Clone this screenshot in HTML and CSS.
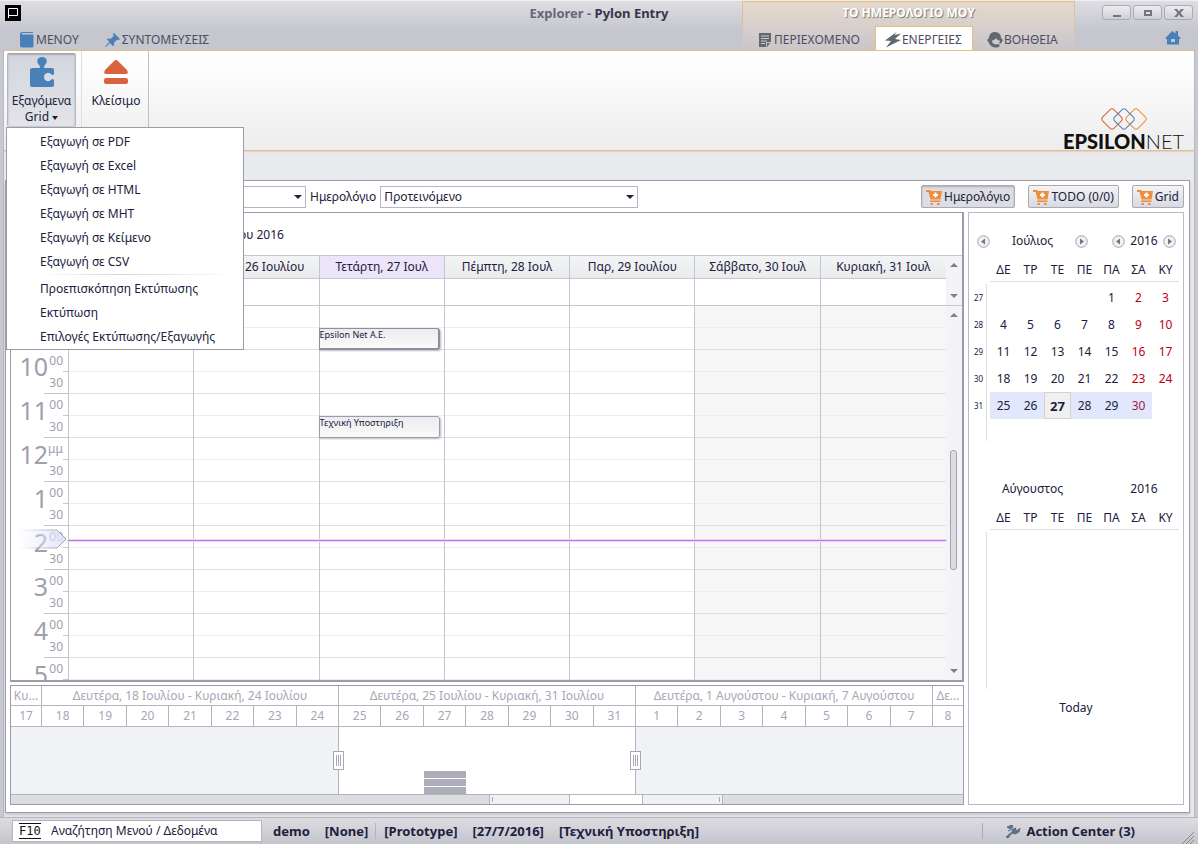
FILE: index.html
```html
<!DOCTYPE html>
<html lang="el">
<head>
  <meta charset="UTF-8" />
  <title>Explorer - Pylon Entry</title>
  <link rel="stylesheet" href="styles.css">
</head>
<body>
  <!-- shared icons -->
  <svg class="defs" aria-hidden="true">
    <symbol id="cart" viewBox="0 0 16 16">
      <path fill="#ef8d3c" d="M0 1h4l1 1h11l-1.500 8.500H4.500L2.500 3H0zM4 11.500h10.500V13H4zM4.500 14H7v2H4.500zM11 14h2.500v2H11z"/>
      <path fill="#fff" d="M8.500 3.500h2V5H12v2h-1.500v1.500h-2V7H7V5h1.500z"/>
    </symbol>
    <symbol id="prev" viewBox="0 0 13 13">
      <circle cx="6.500" cy="6.500" r="5.800" fill="#f0f0f4" stroke="#a3a4ae"/>
      <path fill="#74757f" d="M8 3.500v6l-4-3z"/>
    </symbol>
    <symbol id="next" viewBox="0 0 13 13">
      <circle cx="6.500" cy="6.500" r="5.800" fill="#f0f0f4" stroke="#a3a4ae"/>
      <path fill="#74757f" d="M5 3.500v6l4-3z"/>
    </symbol>
  </svg>

  <header class="header">
    <div class="header-main">
      <svg class="app-icon" viewBox="0 0 16 16" aria-hidden="true">
        <path d="M0 0h16v16H0z"/>
        <path d="M3.500 13V3.500h9v7h-9" fill="none" stroke="#fff"/>
      </svg>
      <nav class="tabs" aria-label="Κύριες καρτέλες">
        <button class="tab">
          <svg viewBox="0 0 16 16" aria-hidden="true"><path fill="#4a80b8" d="M3 0h11v1H3v1.500h11.500V14q0 1.500-1.500 1.500H3Q1 15.500 1 13V2.500Q1 0 3 0z"/></svg>ΜΕΝΟΥ
        </button>
        <button class="tab">
          <svg viewBox="0 0 16 16" aria-hidden="true"><path fill="#4a80b8" d="M9 1l6 6-1.500 1-1.500-.3-3 3 .2 2.300L8 14.200 5 11l-4 4-.7-.7L4.300 10 2 7.500 3.200 6.500l2.500.3 3-2.800L8 2z"/></svg>ΣΥΝΤΟΜΕΥΣΕΙΣ
        </button>
      </nav>
    </div>
    <div class="context">
      <div class="context-title">ΤΟ ΗΜΕΡΟΛΟΓΙΟ ΜΟΥ</div>
      <nav class="tabs" aria-label="Το ημερολόγιο μου">
        <button class="tab">
          <svg viewBox="0 0 16 16" aria-hidden="true"><path fill="#616870" d="M2 1h12v9l-4 5H2z"/><path d="M4 4h8M4 6.500h8M4 9h6M4 11.500h4M9.500 14.500v-4H14" fill="none" stroke="#c9c7ca"/></svg>ΠΕΡΙΕΧΟΜΕΝΟ
        </button>
        <button class="tab active">
          <svg viewBox="0 0 16 16" aria-hidden="true"><path fill="#616870" d="M11.500 0L0 8.500l6 .5-5 6.500L16 8l-6-1 6-5.500-6.500 1.500z"/></svg>ΕΝΕΡΓΕΙΕΣ
        </button>
        <button class="tab">
          <svg viewBox="0 0 16 16" aria-hidden="true"><path fill="#616870" d="M8 0C3.500 0 2 3.500 2 6L0 8l2 3c1 3 4 4.500 7 4.500 2 0 3-.5 4-2L11 12c-4 1.500-6-1-6-3.500C7 8.500 8 7.500 9 6c1 2 2.500 2.500 4 2.500 0 1-.5 2-1 3h2l2-3.500-2-2C14 3 12 0 8 0z"/></svg>ΒΟΗΘΕΙΑ
        </button>
      </nav>
    </div>
    <div class="header-end">
      <div class="window-buttons">
        <button aria-label="Ελαχιστοποίηση"><svg viewBox="0 0 10 10"><path d="M1 7h8v2H1z"/></svg></button>
        <button aria-label="Μεγιστοποίηση"><svg viewBox="0 0 10 10"><path fill-rule="evenodd" d="M1 2h8v6H1zM3 4v2h4V4z"/></svg></button>
        <button aria-label="Κλείσιμο παραθύρου"><svg viewBox="0 0 10 10"><path d="M0 1h3l2 2.500L7 1h3L6.500 5 10 9H7L5 6.500 3 9H0l3.500-4z"/></svg></button>
      </div>
      <a class="home" href="#" aria-label="Αρχική"><svg viewBox="0 0 16 16"><path fill="#4a80b8" fill-rule="evenodd" d="M7 1l3.500 2.500V1H13v4.500L15.500 8v1H14v5.500H2V9H.5V8zM6 9v3h4V9z"/></svg></a>
    </div>
    <h1 class="title"><span>Explorer - </span>Pylon Entry</h1>
  </header>

  <main class="frame">
    <section class="ribbon" aria-label="Ενέργειες">
      <div class="ribbon-group">
        <button class="ribbon-button pressed" aria-haspopup="true" aria-expanded="true">
          <svg viewBox="0 0 32 32" aria-hidden="true"><path fill="#4a80b8" d="M4 13q0-2 2-2h7.500q1-1 0-2.500-3-3-2-6Q12.500 0 16 0t4.500 2.500q1 3-2 6-1 1.500 0 2.500H26q2 0 2 2v4q-1.200 1.500-2.500.5-2-2.200-4.500-1.500-3 1-3 4t3 4q2.500.700 4.500-1.500 1.300-1 2.500.5v5q0 2-2 2H6q-2 0-2-2z"/></svg>
          <span>Εξαγόμενα<br>Grid <i class="caret"></i></span>
        </button>
        <ul class="menu" role="menu">
          <li role="menuitem">Εξαγωγή σε PDF</li>
          <li role="menuitem">Εξαγωγή σε Excel</li>
          <li role="menuitem">Εξαγωγή σε HTML</li>
          <li role="menuitem">Εξαγωγή σε MHT</li>
          <li role="menuitem">Εξαγωγή σε Κείμενο</li>
          <li role="menuitem">Εξαγωγή σε CSV</li>
          <li class="separator" role="separator"></li>
          <li role="menuitem">Προεπισκόπηση Εκτύπωσης</li>
          <li role="menuitem">Εκτύπωση</li>
          <li role="menuitem">Επιλογές Εκτύπωσης/Εξαγωγής</li>
        </ul>
      </div>
      <div class="ribbon-group">
        <button class="ribbon-button">
          <svg viewBox="0 0 32 32" aria-hidden="true"><path fill="#d9623f" d="M14 4q2-2 4 0l9 9q2 4-1 4H6q-3 0-1-4zM6 21h20q2 0 2 2v2q0 2-2 2H6q-2 0-2-2v-2q0-2 2-2z"/></svg>
          <span>Κλείσιμο</span>
        </button>
      </div>
      <div class="logo">
        <svg viewBox="0 0 48 24" aria-hidden="true" fill="none">
          <rect x="4" y="4" width="16" height="16" rx="3" transform="rotate(45 12 12)" stroke="#d9623f"/>
          <rect x="28" y="4" width="16" height="16" rx="3" transform="rotate(45 36 12)" stroke="#ef8d3c"/>
          <rect x="16" y="4" width="16" height="16" rx="3" transform="rotate(45 24 12)" stroke="#4a80b8"/>
        </svg>
        <div class="logo-text"><b>EPSILON</b>NET</div>
      </div>
    </section>

    <section class="panel">
      <div class="toolbar">
        <span class="select view-select"><select aria-label="Προβολή"><option></option></select></span>
        <label for="calendar">Ημερολόγιο</label>
        <span class="select calendar-select"><select id="calendar"><option>Προτεινόμενο</option></select></span>
        <div class="toggles">
          <button class="pressed"><svg><use href="#cart"/></svg>Ημερολόγιο</button>
          <button><svg><use href="#cart"/></svg>TODO (0/0)</button>
          <button><svg><use href="#cart"/></svg>Grid</button>
        </div>
      </div>

      <div class="workspace">
        <div class="left">
          <div class="scheduler">
            <div class="caption">Δευτέρα, 25 Ιουλίου - Κυριακή, 31 Ιουλίου 2016</div>
            <div class="row day-heads">
              <div></div>
              <div>Δευτέρα, 25 Ιουλ</div>
              <div>Τρίτη, 26 Ιουλίου</div>
              <div class="today">Τετάρτη, 27 Ιουλ</div>
              <div>Πέμπτη, 28 Ιουλ</div>
              <div>Παρ, 29 Ιουλίου</div>
              <div>Σάββατο, 30 Ιουλ</div>
              <div>Κυριακή, 31 Ιουλ</div>
              <div class="scroll"><i class="up"></i></div>
            </div>
            <div class="row all-day">
              <div></div><div></div><div></div><div></div><div></div><div></div><div></div><div></div>
              <div class="scroll bottom"><i class="down"></i></div>
            </div>
            <div class="row hours">
              <div class="ruler">
                <div class="hour"><b>9</b><span>00</span><span>30</span></div>
                <div class="hour"><b>10</b><span>00</span><span>30</span></div>
                <div class="hour"><b>11</b><span>00</span><span>30</span></div>
                <div class="hour"><b>12</b><span>μμ</span><span>30</span></div>
                <div class="hour"><b>1</b><span>00</span><span>30</span></div>
                <div class="hour"><b>2</b><span>00</span><span>30</span></div>
                <div class="hour"><b>3</b><span>00</span><span>30</span></div>
                <div class="hour"><b>4</b><span>00</span><span>30</span></div>
                <div class="hour"><b>5</b><span>00</span></div>
              </div>
              <div class="day"></div>
              <div class="day"></div>
              <div class="day">
                <div class="event selected">Epsilon Net A.E.</div>
                <div class="event second">Τεχνική Υποστηριξη</div>
              </div>
              <div class="day"></div>
              <div class="day"></div>
              <div class="day weekend"></div>
              <div class="day weekend"></div>
              <div class="scroll"><i class="up"></i><span class="thumb"></span><i class="down"></i></div>
              <svg class="now-marker" viewBox="0 0 50 20" aria-hidden="true">
                <defs>
                  <linearGradient id="fade"><stop offset="0" stop-color="#e4e8fa" stop-opacity="0"/><stop offset="1" stop-color="#dde3f8" stop-opacity=".9"/></linearGradient>
                  <linearGradient id="edge"><stop offset="0" stop-color="#9a9cab" stop-opacity="0"/><stop offset="1" stop-color="#9a9cab"/></linearGradient>
                </defs>
                <path d="M0 1h39l9 9-9 9H0" fill="url(#fade)" stroke="url(#edge)"/>
              </svg>
              <div class="now-line"></div>
            </div>
          </div>

          <div class="navigator">
            <div class="weeks">
              <div>Κυ...</div>
              <div>Δευτέρα, 18 Ιουλίου - Κυριακή, 24 Ιουλίου</div>
              <div>Δευτέρα, 25 Ιουλίου - Κυριακή, 31 Ιουλίου</div>
              <div>Δευτέρα, 1 Αυγούστου - Κυριακή, 7 Αυγούστου</div>
              <div>Δε...</div>
            </div>
            <div class="dates">
              <div>17</div>
              <div>18</div><div>19</div><div>20</div><div>21</div><div>22</div><div>23</div><div>24</div>
              <div>25</div><div>26</div><div>27</div><div>28</div><div>29</div><div>30</div><div>31</div>
              <div>1</div><div>2</div><div>3</div><div>4</div><div>5</div><div>6</div><div>7</div>
              <div>8</div>
            </div>
            <div class="range">
              <div class="visible">
                <i class="handle start"></i>
                <div class="load"><i></i><i></i><i></i></div>
                <i class="handle end"></i>
              </div>
            </div>
            <div class="range-bar"><span></span><span class="from"></span><span class="white"></span><span class="to"></span><span></span></div>
          </div>
        </div>

        <aside class="months">
          <div class="month-head">
            <button aria-label="Προηγούμενος μήνας"><svg><use href="#prev"/></svg></button>
            <span class="month-name">Ιούλιος</span>
            <button aria-label="Επόμενος μήνας"><svg><use href="#next"/></svg></button>
            <button class="year-prev" aria-label="Προηγούμενο έτος"><svg><use href="#prev"/></svg></button>
            <span class="year">2016</span>
            <button aria-label="Επόμενο έτος"><svg><use href="#next"/></svg></button>
          </div>
          <table class="month">
            <thead>
              <tr><td class="wk"></td><th>ΔΕ</th><th>ΤΡ</th><th>ΤΕ</th><th>ΠΕ</th><th>ΠΑ</th><th>ΣΑ</th><th>ΚΥ</th></tr>
            </thead>
            <tbody>
              <tr><td class="wk">27</td><td></td><td></td><td></td><td></td><td>1</td><td class="red">2</td><td class="red">3</td></tr>
              <tr><td class="wk">28</td><td>4</td><td>5</td><td>6</td><td>7</td><td>8</td><td class="red">9</td><td class="red">10</td></tr>
              <tr><td class="wk">29</td><td>11</td><td>12</td><td>13</td><td>14</td><td>15</td><td class="red">16</td><td class="red">17</td></tr>
              <tr><td class="wk">30</td><td>18</td><td>19</td><td>20</td><td>21</td><td>22</td><td class="red">23</td><td class="red">24</td></tr>
              <tr class="current"><td class="wk">31</td><td>25</td><td>26</td><td class="selected">27</td><td>28</td><td>29</td><td class="red">30</td><td class="none"></td></tr>
              <tr class="last"><td class="wk"></td><td colspan="7"></td></tr>
            </tbody>
          </table>
          <div class="month-head next-month">
            <span class="month-name">Αύγουστος</span>
            <span class="year">2016</span>
          </div>
          <table class="month">
            <thead>
              <tr><td class="wk"></td><th>ΔΕ</th><th>ΤΡ</th><th>ΤΕ</th><th>ΠΕ</th><th>ΠΑ</th><th>ΣΑ</th><th>ΚΥ</th></tr>
            </thead>
            <tbody>
              <tr class="empty"><td class="wk"></td><td colspan="7"></td></tr>
            </tbody>
          </table>
          <button class="today-button">Today</button>
        </aside>
      </div>
    </section>
  </main>

  <footer class="status">
    <label class="search"><kbd>F10</kbd><input type="text" value="Αναζήτηση Μενού / Δεδομένα"></label>
    <span>demo</span>
    <span>[None]</span>
    <span class="divided">[Prototype]</span>
    <span>[27/7/2016]</span>
    <span>[Τεχνική Υποστηριξη]</span>
    <button class="action-center">
      <svg viewBox="0 0 16 16" aria-hidden="true"><path d="M2 4l5-2 1 2-3 2zM1 14l6-5 1-3 3-1-1 3 3-1 2-2-1 4-4 2-3-1-4 5zM8 6l-5 2" fill="#5c7189" stroke="#5c7189"/></svg>Action Center (3)
    </button>
    <svg class="grip" viewBox="0 0 12 12" aria-hidden="true"><path d="M0 12L12 0M4 12l8-8M8 12l4-4" stroke="#85868f" fill="none"/></svg>
  </footer>
</body>
</html>
```

FILE: styles.css
```css
*, *::before, *::after {
  box-sizing: border-box;
}
body {
  margin: 0;
  min-height: 100vh;
  display: flex;
  flex-direction: column;
  font-family: "Noto Sans", "Open Sans", sans-serif;
  font-size: 12px;
  line-height: 16px;
  color: #20203c;
  background: #c8c8d0;
}
button, select, input {
  font: inherit;
  color: inherit;
  padding: 0;
  border: none;
  background: none;
}
svg {
  display: block;
  flex: none;
}
.defs {
  position: absolute;
  width: 0;
  height: 0;
}

/* header */
.header {
  display: grid;
  grid-template-columns: 1fr 333px 123px;
  grid-template-rows: 49px;
  height: 50px;
  background: linear-gradient(#dddde2, #c6c6ce 60%);
  border-top: 1px solid #eeeef1;
}
.header > * {
  grid-row: 1;
}
.title {
  grid-column: 1 / -1;
  justify-self: center;
  align-self: start;
  margin: 4px 0 0;
  font-size: 13px;
  color: #35354c;
  pointer-events: none;
}
.title span {
  color: #66667c;
}
.header-main,
.context,
.header-end {
  display: flex;
  flex-direction: column;
  justify-content: space-between;
}
.header-main {
  grid-column: 1;
}
.context {
  grid-column: 2;
}
.header-end {
  grid-column: 3;
}
.app-icon {
  width: 16px;
  height: 16px;
  margin: 4px 5px;
}
.tabs {
  display: flex;
  height: 24px;
}
.header-main .tabs {
  padding-left: 19px;
  gap: 26px;
}
.tab {
  display: flex;
  align-items: center;
  gap: 1px;
  padding-top: 3px;
  color: #4d4d62;
}
.tab svg {
  width: 16px;
  height: 16px;
}
.context {
  border: solid #e8bf80;
  border-width: 1px 1px 0;
  border-image: linear-gradient(#e8bf80, #c8c8d0) 1;
  background: linear-gradient(#e5d9cd, #c9c6ca);
}
.context-title {
  margin-top: 3px;
  text-align: center;
  font-weight: 700;
  color: #fff;
  text-shadow: 1px 1px 1px #77777f;
}
.context .tab {
  padding: 3px 15px 0 14px;
}
.context .tab.active {
  padding: 2px 10px 0 9px;
  border: 1px solid #e8bf80;
  border-bottom: none;
  background: #fff;
}
.window-buttons {
  display: flex;
  gap: 2px;
  margin: 4px 5px 0;
  justify-content: flex-end;
}
.window-buttons button {
  width: 29px;
  height: 15px;
  display: grid;
  place-items: center;
  border: 1px solid #a9aab4;
  border-radius: 3px;
  background: linear-gradient(#ececf0, #cfcfd7);
}
.window-buttons svg {
  width: 10px;
  height: 10px;
  fill: #73747f;
}
.home {
  align-self: flex-end;
  margin: 0 17px 4px;
}
.home svg {
  width: 16px;
  height: 16px;
}

/* ribbon */
.frame {
  flex: 1;
  margin: 0 3px;
  padding: 0 2px;
  border: 1px solid #b4b5bf;
  border-width: 0 1px;
  background: #e9eaee;
}
.ribbon {
  display: flex;
  height: 101px;
  margin: 0 -2px 29px;
  padding-left: 3px;
  border: 1px solid #e8bf80;
  border-width: 1px 0;
  background: linear-gradient(#fff, #fbfbfb 30%, #ededee);
  box-shadow: 0 1px 1px #dcd6d0;
}
.ribbon-group {
  position: relative;
  height: 76px;
  padding: 2px 5px 0 0;
  border-right: 1px solid #dedee3;
}
.ribbon-group + .ribbon-group {
  padding: 2px 0 0 2px;
  border-color: #bfc0ca;
}
.ribbon-button {
  display: flex;
  flex-direction: column;
  align-items: center;
  width: 69px;
  height: 74px;
  padding-top: 3px;
  border: 1px solid transparent;
}
.ribbon-group + .ribbon-group .ribbon-button {
  width: 64px;
}
.ribbon-button.pressed {
  border-color: #9fa0ad #b4b5c0 #c9cad2;
  border-radius: 2px;
  background: linear-gradient(#d3d6de, #e3e4e8);
  box-shadow: inset 0 1px 2px #a9aab4;
}
.ribbon-button svg {
  width: 32px;
  height: 32px;
  margin-bottom: 4px;
}
.caret {
  display: inline-block;
  vertical-align: middle;
  border: 3px solid transparent;
  border-top: 4px solid #20203c;
  border-bottom: none;
}
.menu {
  position: absolute;
  z-index: 2;
  top: 76px;
  left: -1px;
  width: 238px;
  margin: 0;
  padding: 2px 0 0;
  list-style: none;
  border: 1px solid #9a9bab;
  background: #fff;
}
.menu li {
  padding: 4px 0 4px 33px;
  white-space: nowrap;
}
.menu .separator {
  height: 3px;
  margin: 0 4px 0 33px;
  padding: 0;
  background: linear-gradient(90deg, #fff, #d5d5da 40%, #fff) 0 0 / 100% 1px no-repeat;
}
.logo {
  margin: 56px 10px 0 auto;
  width: 121px;
}
.logo svg {
  width: 48px;
  height: 24px;
  margin: 0 auto;
}
.logo-text {
  font-family: Lato, sans-serif;
  font-size: 20px;
  line-height: 20px;
  font-weight: 300;
  color: #111;
  white-space: nowrap;
}
.logo-text b {
  font-weight: 900;
}

/* main panel */
.panel {
  margin: 0 2px 0 -1px;
  padding: 0 5px 7px 4px;
  border: 1px solid #9a9bab;
  background: #fff;
  box-shadow: 0 2px 3px #c4c5cc;
}
.toolbar {
  display: flex;
  align-items: center;
  gap: 4px;
  height: 31px;
}
.select {
  position: relative;
  height: 22px;
  border: 1px solid #b5b6c2;
}
.select::after {
  content: "";
  position: absolute;
  right: 3px;
  top: 8px;
  border: 4px solid transparent;
  border-top-color: #20203c;
  border-bottom: none;
  pointer-events: none;
}
.select select {
  appearance: none;
  width: 100%;
  height: 20px;
  padding-left: 3px;
}
.view-select {
  width: 206px;
  margin-left: 90px;
}
.calendar-select {
  width: 258px;
}
.toggles {
  display: flex;
  gap: 13px;
  margin-left: auto;
}
.toggles button {
  display: flex;
  align-items: center;
  gap: 2px;
  height: 23px;
  padding: 0 4px;
  border: 1px solid #a9aab6;
  border-radius: 2px;
  background: linear-gradient(#f4f4f6, #d9dae0);
}
.toggles button.pressed {
  background: #dddee3;
  box-shadow: inset 0 1px 2px #a9aab4;
}
.toggles svg {
  width: 16px;
  height: 16px;
}
.workspace {
  display: flex;
  gap: 4px;
}
.left {
  flex: 1;
  min-width: 0;
}

/* scheduler */
.scheduler {
  border: 1px solid #9a9bab;
  border-right-width: 2px;
  border-bottom-width: 2px;
  margin-bottom: 3px;
}
.caption {
  height: 42px;
  padding: 14px 0 0 8px;
}
.row {
  position: relative;
  display: grid;
  grid-template-columns: 58px repeat(7, 1fr) 16px;
}
.row > div {
  border-right: 1px solid #c5c6d0;
  min-width: 0;
}
.row > div:nth-child(8),
.row > .scroll {
  border-right: none;
}
.day-heads {
  height: 24px;
  line-height: 22px;
  text-align: center;
}
.day-heads > div {
  border: solid #c5c6d0;
  border-width: 1px 1px 1px 0;
  background: linear-gradient(#f3f4f5, #eaebed);
  white-space: nowrap;
  overflow: hidden;
}
.day-heads > div:first-child {
  background: none;
  border-bottom: none;
}
.day-heads .today {
  background: #ece4f8;
}
.all-day {
  height: 27px;
  border-bottom: 1px solid #c5c6d0;
}
.row > .scroll {
  display: flex;
  flex-direction: column;
  align-items: center;
  padding: 7px 0;
  border-bottom: none;
  background: #f4f4f7;
}
.up, .down {
  border: 4px solid transparent;
}
.up {
  border-bottom-color: #80818d;
  border-top: none;
}
.down {
  margin-top: auto;
  border-top-color: #80818d;
  border-bottom: none;
}
.thumb {
  width: 7px;
  height: 120px;
  margin-top: 133px;
  border: 1px solid #a3a4b0;
  border-radius: 3px;
  background: #dcdde3;
}
.day {
  display: grid;
  grid-template-rows: repeat(17, 22px);
  background: repeating-linear-gradient(transparent 0 21px, #ededf0 21px 22px, transparent 22px 43px, #dedee3 43px 44px);
}
.weekend {
  background-color: #f6f6f7;
}
.event {
  grid-row: 2;
  margin: 0 4px 0 -1px;
  overflow: hidden;
  font-size: 9px;
  line-height: 12px;
  white-space: nowrap;
  border: 1px solid #9a9bab;
  border-radius: 0 3px 3px 0;
  background: linear-gradient(#ececef, #fafafa);
  box-shadow: 1px 1px 2px #b9bac2;
}
.event.selected {
  border-width: 1px 2px 2px 1px;
  border-color: #8d8e9e;
}
.event.second {
  grid-row: 6;
}
.ruler {
  height: 374px;
  overflow: hidden;
}
.hour {
  display: grid;
  grid-template-columns: 37px 15px;
  grid-template-rows: 22px 22px;
  color: #a0a0ae;
  text-align: right;
  line-height: 22px;
  background:
    linear-gradient(#c5c6d0, #c5c6d0) 52px 21px / 6px 1px no-repeat,
    linear-gradient(#c5c6d0, #c5c6d0) 33px 43px / 24px 1px no-repeat;
}
.hour b {
  grid-row: span 2;
  font-size: 25px;
  line-height: 32px;
  font-weight: 400;
}
.now-marker {
  position: absolute;
  left: 7px;
  top: 223px;
  width: 50px;
  height: 20px;
}
.row > .now-line {
  position: absolute;
  left: 57px;
  right: 16px;
  top: 234px;
  height: 1px;
  background: #c56cf0;
  box-shadow: 0 0 1px 1px #ecd6f8;
  border: none;
}

/* date navigator */
.navigator {
  border: 1px solid #9a9bab;
  color: #a7a7b5;
}
.weeks,
.dates,
.range {
  display: grid;
  grid-template-columns: 31px repeat(21, 1fr) 30px;
}
.weeks > div,
.dates > div {
  overflow: hidden;
  text-align: center;
  white-space: nowrap;
  border-right: 1px solid #b4b5bf;
  border-bottom: 1px solid #b4b5bf;
}
.weeks > div:last-child,
.dates > div:last-child {
  border-right: none;
}
.weeks > div {
  height: 20px;
  line-height: 19px;
}
.weeks > div:not(:first-child):not(:last-child) {
  grid-column: span 7;
}
.dates > div {
  height: 21px;
  line-height: 20px;
}
.range {
  height: 67px;
  background: #f1f2f5;
}
.visible {
  position: relative;
  grid-column: 9 / span 7;
  display: grid;
  grid-template-columns: repeat(7, 1fr);
  align-items: end;
  margin-left: -1px;
  border: solid #b4b5bf;
  border-width: 0 1px;
  background: #fff;
}
.load {
  grid-column: 3;
  display: grid;
  gap: 1px;
}
.load i {
  height: 7px;
  background: #adadba;
}
.handle {
  position: absolute;
  top: 24px;
  width: 11px;
  height: 19px;
  border: 1px solid #a7a8b3;
  background: repeating-linear-gradient(90deg, #a7a8b3 0 1px, #fff 1px 2px) 2px 3px / 5px 11px no-repeat #fff;
}
.handle.start {
  left: -6px;
}
.handle.end {
  right: -6px;
}
.range-bar {
  display: grid;
  grid-template-columns: 479fr 80fr 73fr 80fr 241fr;
  height: 10px;
  border-top: 1px solid #b4b5bf;
  background: #dcdde1;
}
.range-bar span + span {
  border-left: 1px solid #b4b5bf;
}
.range-bar .from {
  background: linear-gradient(#a7a8b3, #a7a8b3) 2px 2px / 1px 5px no-repeat #f0f1f3;
}
.range-bar .to {
  background: linear-gradient(#a7a8b3, #a7a8b3) right 2px top 2px / 1px 5px no-repeat #f0f1f3;
}
.range-bar .white {
  background: #fff;
}

/* month calendars */
.months {
  width: 216px;
  padding-top: 20px;
  border: 1px solid #b9bac5;
}
.month-head {
  display: flex;
  align-items: center;
  height: 16px;
  padding: 0 7px 0 8px;
}
.month-head button,
.month-head svg {
  width: 13px;
  height: 13px;
}
.month-name {
  width: 85px;
  text-align: center;
}
.year {
  width: 38px;
  text-align: center;
}
.year-prev {
  margin-left: 24px;
}
.next-month {
  margin-top: 40px;
}
.next-month .month-name {
  margin: 0 50px 0 13px;
}
.month {
  margin-top: 10px;
  border-collapse: separate;
  border-spacing: 0;
  table-layout: fixed;
  width: 210px;
  text-align: center;
}
.month td,
.month th {
  width: 27px;
  height: 27px;
  padding: 0;
  font-weight: 400;
}
.month th {
  height: 23px;
  border-bottom: 1px solid #dedee3;
}
.month tbody::before {
  content: "";
  display: block;
  height: 2px;
}
.month .wk {
  width: 21px;
  padding-right: 2px;
  font-size: 8px;
}
.month thead .wk {
  height: 23px;
}
.month tbody .wk {
  background: linear-gradient(#dedee3, #dedee3) 17px 0 / 1px 100% no-repeat;
}
.month .red {
  color: #c00010;
}
.month .current td:not(.wk):not(.none) {
  background: #e1e8fb;
}
.month .current .red {
  color: #a01848;
}
.month .current td.selected:not(.wk) {
  font-size: 13px;
  font-weight: 700;
  border: 1px solid #d2d2d2;
  background: #f0f0f0;
}
.month .last td {
  height: 22px;
}
.month .empty td {
  height: 157px;
}
.today-button {
  display: block;
  margin: 11px auto 0;
}

/* status bar */
.status {
  display: flex;
  align-items: center;
  gap: 15px;
  height: 27px;
  padding: 0 4px 0 12px;
  border-top: 1px solid #b4b5bf;
  background: linear-gradient(#dcdce1, #c4c4cd);
  font-size: 13px;
  font-weight: 700;
  white-space: nowrap;
}
.search {
  display: flex;
  align-items: center;
  gap: 10px;
  width: 250px;
  height: 22px;
  margin-right: -4px;
  padding-left: 6px;
  border: 1px solid #b4b5bf;
  background: #fff;
  font-size: 12px;
  font-weight: 400;
}
.search kbd {
  width: 22px;
  border: solid #111;
  border-width: 1px 0;
  font: 12px/14px "DejaVu Sans Mono", monospace;
  color: #111;
}
.search input {
  flex: 1;
  min-width: 0;
}
.divided {
  margin-left: -8px;
  padding-left: 8px;
  border-left: 1px solid #b4b5bf;
}
.action-center {
  display: flex;
  align-items: center;
  gap: 5px;
  margin-left: auto;
  padding-left: 22px;
  border-left: 1px solid #a9aab4;
}
.action-center svg {
  width: 16px;
  height: 16px;
}
.grip {
  width: 12px;
  height: 12px;
  margin-left: 32px;
  align-self: flex-end;
}
```
